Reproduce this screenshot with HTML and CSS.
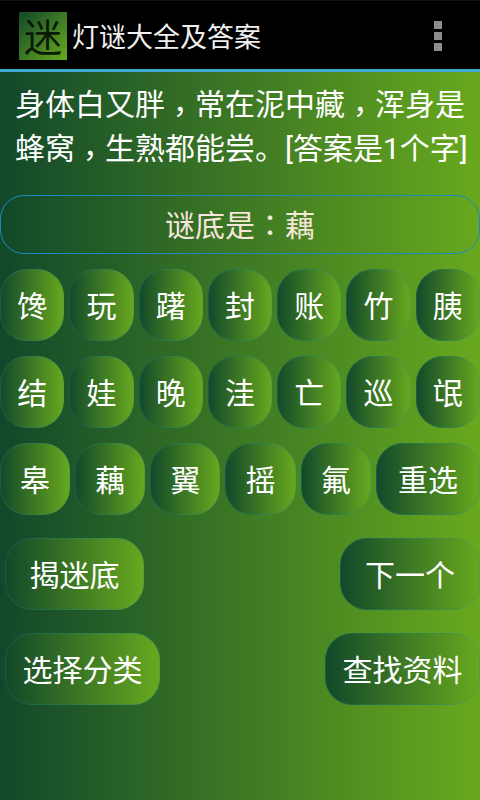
FILE: index.html
```html
<!DOCTYPE html>
<html lang="zh-CN">
  <head>
    <meta charset="UTF-8" />
    <meta name="viewport" content="width=device-width, initial-scale=1.0" />
    <title>灯谜大全及答案</title>
    <link rel="stylesheet" href="styles.css">
  </head>
  <body>
    <header class="action-bar">
      <div class="app-icon">迷</div>
      <h1 class="app-title">灯谜大全及答案</h1>
      <div class="overflow-menu">
        <span></span>
        <span></span>
        <span></span>
      </div>
    </header>
    <main class="content">
      <p class="riddle">身体白又胖<span class="punct comma" lang="zh-TW">&#xFF0C;</span>常在泥中藏<span class="punct comma" lang="zh-TW">&#xFF0C;</span>浑身是蜂窝<span class="punct comma" lang="zh-TW">&#xFF0C;</span>生熟都能尝。[答案是1个字]</p>
      <div class="answer">谜底是<span class="punct" lang="zh-TW">&#xFF1A;</span>藕</div>
      <div class="char-row">
        <button>馋</button>
        <button>玩</button>
        <button>躇</button>
        <button>封</button>
        <button>账</button>
        <button>竹</button>
        <button>胰</button>
      </div>
      <div class="char-row">
        <button>结</button>
        <button>娃</button>
        <button>晚</button>
        <button>洼</button>
        <button>亡</button>
        <button>巡</button>
        <button>氓</button>
      </div>
      <div class="char-row">
        <button>皋</button>
        <button>藕</button>
        <button>翼</button>
        <button>摇</button>
        <button>氟</button>
        <button class="wide">重选</button>
      </div>
      <div class="action-row">
        <button class="reveal">揭迷底</button>
        <button class="next">下一个</button>
      </div>
      <div class="action-row">
        <button class="category">选择分类</button>
        <button class="lookup">查找资料</button>
      </div>
    </main>
  </body>
</html>
```

FILE: styles.css
```css
* {
  box-sizing: border-box;
}
html,
body {
  height: 100%;
}
body {
  margin: 0;
  display: flex;
  flex-direction: column;
  font-family: "Noto Sans CJK SC", sans-serif;
  color: white;
  background: black;
  overflow: hidden;
}
.action-bar {
  display: flex;
  align-items: center;
  height: 72px;
  padding: 2px 38px 0 19px;
  background: black;
  border-top: 1px solid #111;
  border-bottom: 3px solid #3fa9d0;
}
.app-icon {
  width: 48px;
  height: 48px;
  font-size: 38px;
  line-height: 46px;
  text-align: center;
  color: #0a1a08;
  background: linear-gradient(135deg, #12482a, #68a91e);
}
.app-title {
  flex: 1;
  margin: 0 0 2px 5px;
  font-size: 27px;
  font-weight: normal;
  color: #f0f0f0;
}
.overflow-menu {
  display: flex;
  flex-direction: column;
  gap: 3px;
}
.overflow-menu span {
  width: 8px;
  height: 8px;
  background: #8c8c8c;
}
.content {
  flex: 1;
  background: linear-gradient(90deg, #12482a, #68a91e);
}
.punct {
  font-family: "Noto Sans CJK TC", sans-serif;
}
.comma {
  line-height: 0;
  vertical-align: -7px;
}
.riddle {
  height: 103px;
  margin: 0;
  padding: 11px 0 0 15px;
  font-family: Roboto, "Noto Sans CJK SC", sans-serif;
  font-size: 30px;
  line-height: 44px;
}
.answer {
  height: 59px;
  margin-top: 20px;
  font-size: 30px;
  line-height: 54px;
  text-align: center;
  color: #f5e6da;
  border: 1px solid #1c8ac0;
  border-radius: 24px;
}
button {
  height: 72px;
  padding: 0 0 3px;
  font-family: inherit;
  font-size: 30px;
  color: white;
  background: linear-gradient(90deg, #12482a, #68a91e) border-box;
  border: 1px solid rgba(28, 138, 160, 0.3);
  border-radius: 27px;
}
.char-row {
  display: flex;
  gap: 5px;
  margin-top: 15px;
}
.char-row button {
  flex: 1;
}
.char-row .wide {
  flex: 1.5;
}
.action-row {
  display: flex;
  justify-content: space-between;
  margin-top: 23px;
  padding-left: 5px;
}
.reveal {
  width: 139px;
}
.next {
  width: 140px;
}
.category,
.lookup {
  width: 155px;
}
```
